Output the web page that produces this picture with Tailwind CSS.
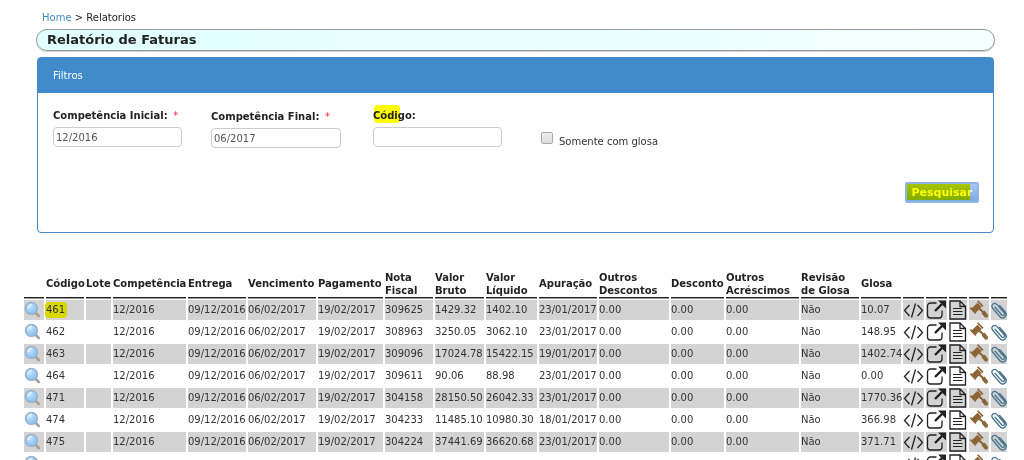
<!DOCTYPE html>
<html lang="pt-BR">
<head>
<meta charset="utf-8">
<title>Relatório de Faturas</title>
<script src="https://cdn.jsdelivr.net/npm/@tailwindcss/browser@4"></script>
</head>
<body class="h-screen overflow-hidden bg-white font-['DejaVu_Sans',sans-serif] text-[10px] leading-[14px] text-[#333]">
<svg class="absolute size-0" aria-hidden="true">
  <defs>
    <radialGradient id="lens" cx="0.4" cy="0.35" r="0.7"><stop offset="0" stop-color="#c4e4ff"/><stop offset="1" stop-color="#7fb9ee"/></radialGradient>
  </defs>
  <symbol id="i-search" viewBox="0 0 18 18"><path d="M11.8 12l3 3" stroke="#a9a096" stroke-width="2.600" stroke-linecap="round"/><circle cx="7.400" cy="7.400" r="6" fill="url(#lens)" stroke="#9bb0c8" stroke-width="1.400"/><path d="M4 7a4 4 0 0 1 4-3.400" fill="none" stroke="#e4f3ff" stroke-width="1.200"/></symbol>
  <symbol id="i-code" viewBox="0 0 22 20"><path d="M6.500 5L1.500 10.500L6.500 16M14.500 5l5 5.500L14.500 16M12.500 3.500L8.500 17.500" fill="none" stroke="#222" stroke-width="1.300"/></symbol>
  <symbol id="i-share" viewBox="0 0 22 20"><path d="M10.500 3H4.500a3 3 0 0 0-3 3v9a3 3 0 0 0 3 3h8.500a3 3 0 0 0 3-3v-4.500" fill="none" stroke="#222" stroke-width="1.300"/><path d="M9 11L16 4" stroke="#222" stroke-width="2.400"/><path d="M12 .5h8v8z" fill="#222"/></symbol>
  <symbol id="i-doc" viewBox="0 0 18 20"><path d="M1 1h10l5.500 5.500v12.500H1zM11 1v5.500h5.500" fill="none" stroke="#222" stroke-width="1.300"/><path d="M4 8.500h8.500M4 11.500h9.500M4 14.500h9.500" stroke="#222" stroke-width="1.200"/></symbol>
  <symbol id="i-gavel" viewBox="0 0 20 20"><g fill="#8c6636"><path d="M2.500 8.500L8.500 2.700l4.200 4.300-6 5.800z"/><path d="M8 1.200l1.200-1 5.400 5.600-1.300 1.200zM.8 8.200L2 7.100l5.400 5.700-1.200 1.200z"/><path d="M9.700 9.500l1.600-1.600 3.200 3.200 1.200-.3 3.200 3.900c.8 1.800-1 3.600-2.800 2.800l-3.300-3.800.2-1.200z"/></g></symbol>
  <symbol id="i-clip" viewBox="0 0 16 20"><path d="M4 7.300l6.600 7.500c1.800 1.700 4-.2 2.600-2.100L6 4.600C3.300 1.700-.7 4.900 1.700 8.300l7.300 8.400c3.500 3.400 8.200-.8 5.300-4.700L8.600 5.400" fill="none" stroke="#47748f" stroke-width="1.300" stroke-linecap="round"/></symbol>
</svg>

<nav class="pt-[11px] pl-[42px] text-[#222]"><a href="#" class="text-[#428bca]">Home</a> &gt; Relatorios</nav>

<header class="mt-1 mr-[29px] ml-9 flex h-[22px] items-center rounded-full border border-[#999] bg-linear-to-r from-[#e0ffff] to-[#f4ffff] pl-[10px] shadow-[0_1px_1px_#ccc]">
  <h1 class="text-[13px] font-bold text-[#222]">Relatório de Faturas</h1>
</header>

<section class="mt-[6px] mr-[30px] ml-[37px] rounded-[4px] border border-[#428bca]">
  <h2 class="bg-[#428bca] py-[11px] pl-[15px] text-[10px] leading-[13px] text-white">Filtros</h2>
  <form class="pr-[14px] pb-[29px] pl-[15px]" onsubmit="return false">
    <div class="flex items-start pt-4">
      <div class="mr-[29px] w-[129px]">
        <label for="ini" class="block font-bold whitespace-nowrap text-[#222]">Competência Inicial: <span class="ml-[2px] font-normal text-red-500">*</span></label>
        <input id="ini" value="12/2016" class="mt-1 block h-5 w-full rounded-[4px] border border-[#ccc] px-[2px] text-[#555]">
      </div>
      <div class="mt-px mr-8 w-[130px]">
        <label for="fim" class="block font-bold whitespace-nowrap text-[#222]">Competência Final: <span class="ml-[2px] font-normal text-red-500">*</span></label>
        <input id="fim" value="06/2017" class="mt-1 block h-5 w-full rounded-[4px] border border-[#ccc] px-[2px] text-[#555]">
      </div>
      <div class="mr-[39px] w-[129px]">
        <label for="cod" class="relative block font-bold text-[#222]"><span class="absolute -top-1 left-px h-[18px] w-[26px] rounded-[4px] bg-[#ffff00]"></span><span class="relative">Código:</span></label>
        <input id="cod" class="mt-1 block h-5 w-full rounded-[4px] border border-[#ccc] px-[2px] text-[#555]">
      </div>
      <div class="flex items-start pt-[23px]">
        <input id="glosa" type="checkbox" class="size-3 appearance-none rounded-[2px] border border-[#aaa] bg-linear-to-b from-[#eee] to-[#ddd]">
        <label for="glosa" class="mt-[3px] ml-[6px]">Somente com glosa</label>
      </div>
    </div>
    <div class="mt-[33px] flex justify-end">
      <button class="relative h-[21px] w-[74px] rounded-[2px] border-2 border-[#8fb4e6] bg-linear-to-b from-[#a6c6f0] to-[#7faae0] text-[11px] leading-[15px] font-bold text-white">Pesquisar<span class="absolute top-0 left-0 h-4 w-[63px] bg-[#ffff00] mix-blend-multiply"></span></button>
    </div>
  </form>
</section>

<main class="mt-[35px] mr-[15px] ml-[22px]">
  <table class="w-full table-fixed border-separate border-spacing-[2px] whitespace-nowrap">
    <colgroup>
      <col class="w-[20px]"><col class="w-[38px]"><col class="w-[25px]"><col class="w-[73px]"><col class="w-[58px]"><col class="w-[68px]"><col class="w-[65px]"><col class="w-[48px]"><col class="w-[49px]"><col class="w-[51px]"><col class="w-[58px]"><col class="w-[70px]"><col class="w-[53px]"><col class="w-[73px]"><col class="w-[58px]"><col class="w-[40px]"><col class="w-[21px]"><col class="w-[21px]"><col class="w-[18px]"><col class="w-[20px]"><col class="w-[16px]">
    </colgroup>
    <thead><tr id="cab" class="h-7 text-left leading-[13px] text-[#222]"></tr></thead>
    <tbody id="linhas"></tbody>
  </table>
</main>

<script>
const titulos = ['', 'Código', 'Lote', 'Competência', 'Entrega', 'Vencimento', 'Pagamento', 'Nota<br>Fiscal', 'Valor<br>Bruto', 'Valor<br>Líquido', 'Apuração', 'Outros<br>Descontos', 'Desconto', 'Outros<br>Acréscimos', 'Revisão<br>de Glosa', 'Glosa', '', '', '', '', ''];
const faturas = [
  ['461', '309625', '1429.32', '1402.10', '23/01/2017', '10.07'],
  ['462', '308963', '3250.05', '3062.10', '23/01/2017', '148.95'],
  ['463', '309096', '17024.78', '15422.15', '19/01/2017', '1402.74'],
  ['464', '309611', '90.06', '88.98', '23/01/2017', '0.00'],
  ['471', '304158', '28150.50', '26042.33', '23/01/2017', '1770.36'],
  ['474', '304233', '11485.10', '10980.30', '18/01/2017', '366.98'],
  ['475', '304224', '37441.69', '36620.68', '23/01/2017', '371.71'],
  null
];
const icone = (id, cls) => `<a href="#" class="block"><svg class="${cls}"><use href="#${id}"/></svg></a>`;
document.getElementById('cab').innerHTML = titulos.map(t => `<th class="border-b border-[#222] p-0 align-middle font-bold shadow-[0_1px_0_#999]">${t}</th>`).join('');
document.getElementById('linhas').innerHTML = faturas.map((f, i) => {
  const dados = f ? [
    i === 0 ? '<span class="-ml-px inline-block h-4 rounded-[4px] bg-[#d8d800] pr-[2px] pl-px leading-4">461</span>' : f[0],
    '', '12/2016', '09/12/2016', '06/02/2017', '19/02/2017', f[1], f[2], f[3], f[4], '0.00', '0.00', '0.00', 'Não', f[5]
  ] : Array(15).fill('');
  const celulas = [icone('i-search', 'block h-[18px] w-[18px]'), ...dados,
    icone('i-code', 'block h-5 w-[22px]'), icone('i-share', 'block h-5 w-[22px]'), icone('i-doc', 'block h-5 w-[18px]'), icone('i-gavel', 'block h-5 w-5'), icone('i-clip', 'block h-5 w-4')];
  const fundo = i % 2 === 0 ? 'bg-[#d3d3d3]' : 'bg-white';
  return '<tr class="h-5">' + celulas.map(c => `<td class="${fundo} h-5 p-0 align-middle">${c}</td>`).join('') + '</tr>';
}).join('');
</script>
</body>
</html>
